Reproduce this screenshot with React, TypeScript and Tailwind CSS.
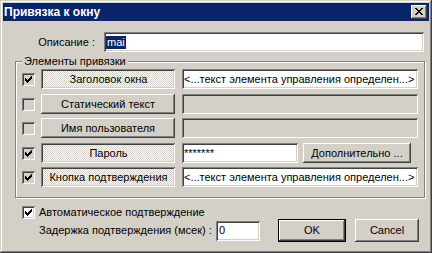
import React from "react";

type BindRow = {
  label: string;
  checked: boolean;
  value?: string;
  extra?: boolean;
  mt: string;
};

const rows: BindRow[] = [
  { label: "Заголовок окна", checked: true, value: "<...текст элемента управления определен...>", mt: "mt-[1px]" },
  { label: "Статический текст", checked: false, mt: "mt-[5px]" },
  { label: "Имя пользователя", checked: false, mt: "mt-[4px]" },
  { label: "Пароль", checked: true, value: "*******", extra: true, mt: "mt-[5px]" },
  { label: "Кнопка подтверждения", checked: true, value: "<...текст элемента управления определен...>", mt: "mt-[4px]" },
];

// win2000 3d edges
const raised =
  "shadow-[inset_-1px_-1px_0_#404040,inset_1px_1px_0_#fff,inset_-2px_-2px_0_#808080,inset_2px_2px_0_#d4d0c8]";
const sunken =
  "shadow-[inset_1px_1px_0_#808080,inset_-1px_-1px_0_#fff,inset_2px_2px_0_#404040,inset_-2px_-2px_0_#d4d0c8]";
const dither = "bg-[image:repeating-conic-gradient(#fff_0%_25%,#d4d0c8_0%_50%)] bg-[length:2px_2px]";

function Check({ checked, white }: { checked: boolean; white?: boolean }) {
  return (
    <div className={`w-[13px] h-[13px] shrink-0 ${sunken} ${white ? "bg-white" : "bg-[#d4d0c8]"}`}>
      {checked && (
        <svg width="13" height="13" viewBox="0 0 13 13" shapeRendering="crispEdges" className="block">
          <path
            fill="#000"
            d="M9 3h1v1H9z M8 4h2v1H8z M3 5h1v1H3z M7 5h3v1H7z M3 6h2v1H3z M6 6h3v1H6z M3 7h5v1H3z M4 8h3v1H4z M5 9h1v1H5z"
          />
        </svg>
      )}
    </div>
  );
}

function Row({ row }: { row: BindRow }) {
  return (
    <div className={`flex items-center h-[20px] pl-[6px] ${row.mt}`}>
      <Check checked={row.checked} />
      <div
        className={`ml-[6px] w-[134px] h-[20px] flex items-center justify-center ${
          row.checked ? `${sunken} ${dither} pt-[1px] pl-[1px]` : `${raised} bg-[#d4d0c8]`
        }`}
      >
        {row.label}
      </div>
      {row.extra ? (
        <>
          <div className={`ml-[7px] w-[116px] h-[20px] flex items-center pl-[2px] bg-white ${sunken}`}>
            {row.value}
          </div>
          <div className={`ml-[5px] w-[108px] h-[20px] flex items-center justify-center bg-[#d4d0c8] ${raised}`}>
            Дополнительно ...
          </div>
        </>
      ) : (
        <div
          className={`ml-[7px] w-[236px] h-[20px] flex items-center pl-[2px] whitespace-nowrap overflow-hidden ${sunken} ${
            row.checked ? "bg-white" : "bg-[#d4d0c8]"
          }`}
        >
          {row.value}
        </div>
      )}
    </div>
  );
}

export default function App() {
  return (
    <div className="w-[432px] h-[253px] bg-[#d4d0c8] p-[3px] text-[11px] leading-[13px] text-black font-['Liberation_Sans',Arial,sans-serif] shadow-[inset_-1px_-1px_0_#404040,inset_1px_1px_0_#d4d0c8,inset_-2px_-2px_0_#808080,inset_2px_2px_0_#fff]">
      <div className="h-[18px] bg-[#0a246a] flex items-center justify-between pl-[1px] pr-[2px]">
        <span className="text-white font-bold text-[12px]">Привязка к окну</span>
        <div className={`w-[16px] h-[14px] bg-[#d4d0c8] flex justify-center pt-[3px] ${raised}`}>
          <svg width="8" height="7" viewBox="0 0 8 7" shapeRendering="crispEdges" className="block">
            <path
              fill="#000"
              d="M0 0h2v1H0z M6 0h2v1H6z M1 1h2v1H1z M5 1h2v1H5z M2 2h4v1H2z M3 3h2v1H3z M2 4h4v1H2z M1 5h2v1H1z M5 5h2v1H5z M0 6h2v1H0z M6 6h2v1H6z"
            />
          </svg>
        </div>
      </div>

      <div className="flex items-center mt-[11px] h-[20px]">
        <div className="w-[92px] text-right">Описание :</div>
        <div className={`ml-[9px] w-[320px] h-[20px] bg-white flex items-center pl-[2px] ${sunken}`}>
          <span className="bg-[#0a246a] text-white px-[1px]">mai</span>
        </div>
      </div>

      <fieldset className="mt-[3px] ml-[12px] w-[410px] border border-[#808080] pb-[10px] shadow-[inset_1px_1px_0_#fff,1px_1px_0_#fff]">
        <legend className="ml-[6px] px-[2px] bg-[#d4d0c8]">Элементы привязки</legend>
        {rows.map((r) => (
          <Row key={r.label} row={r} />
        ))}
      </fieldset>

      <div className="flex items-center mt-[8px] ml-[19px] h-[13px]">
        <Check checked white />
        <span className="ml-[4px]">Автоматическое подтверждение</span>
      </div>

      <div className="flex items-center h-[23px] ml-[36px]">
        <div className="w-[177px]">Задержка подтверждения (мсек) :</div>
        <div className={`w-[44px] h-[20px] bg-white flex items-center pl-[3px] ${sunken}`}>0</div>
        <div className="ml-[18px] w-[68px] h-[23px] border border-black">
          <div className={`w-full h-full flex items-center justify-center bg-[#d4d0c8] ${raised}`}>OK</div>
        </div>
        <div className={`ml-[9px] w-[64px] h-[23px] flex items-center justify-center bg-[#d4d0c8] ${raised}`}>
          Cancel
        </div>
      </div>
    </div>
  );
}
